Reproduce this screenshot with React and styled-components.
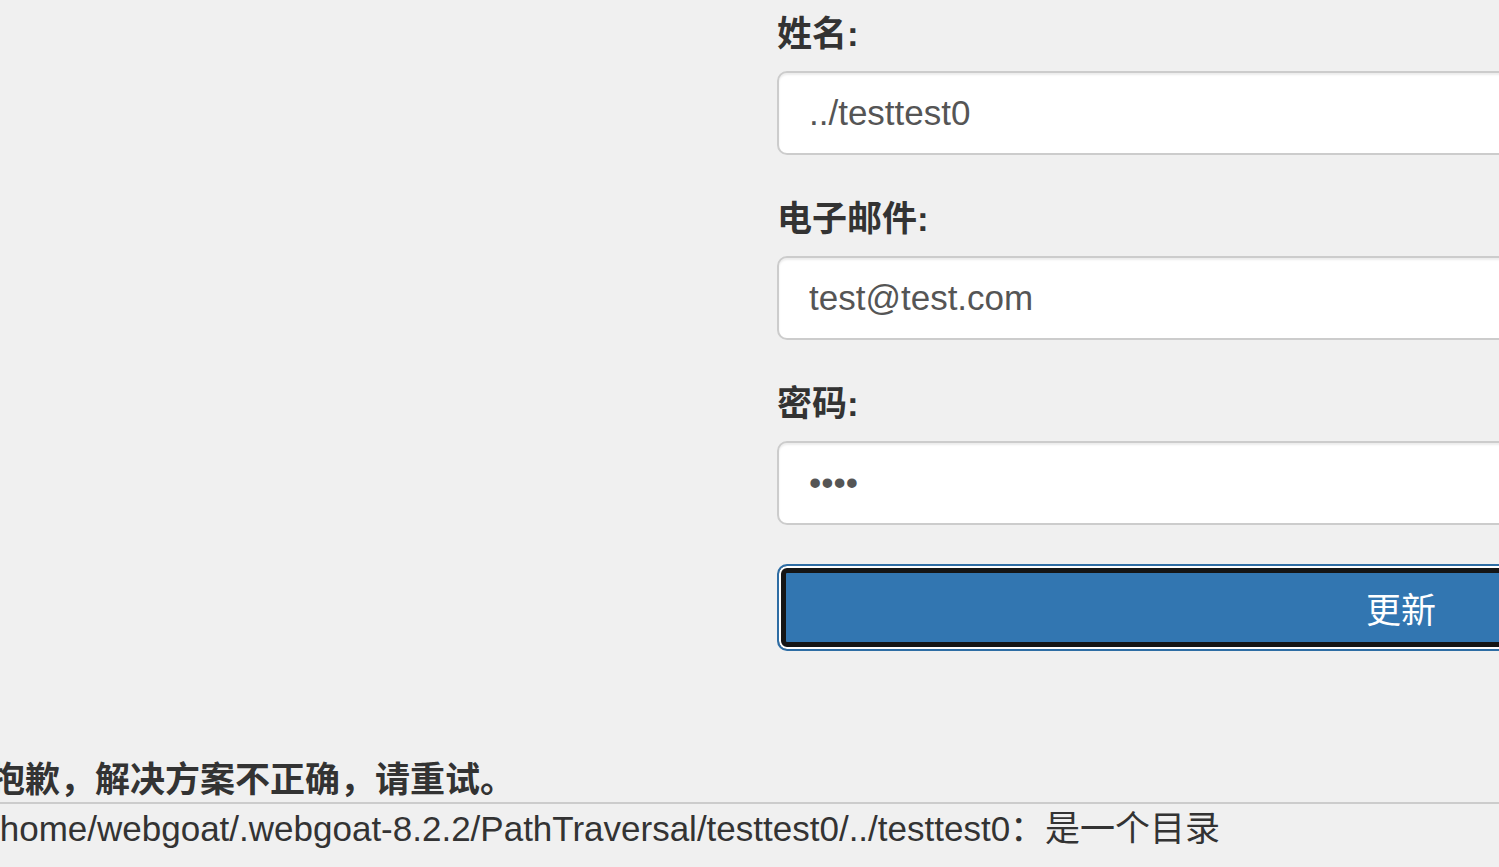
import React from "react";
import styled, { createGlobalStyle } from "styled-components";

const GlobalStyle = createGlobalStyle`
    html, body {
        margin: 0;
        padding: 0;
        background: #f0f0f0;
        overflow: hidden;
    }
    body {
        font-family: "Liberation Sans", "Noto Sans CJK SC", sans-serif;
        color: #333;
    }
`;

const Page = styled.div`
    width: 1499px;
    height: 867px;
    overflow: hidden;
    display: flex;
    flex-direction: column;
`;

const FormColumn = styled.form`
    padding: 9px 0 0 777px;
    width: 1248px;
    display: flex;
    flex-direction: column;
`;

const FormGroup = styled.div`
    display: flex;
    flex-direction: column;
    margin-bottom: 39px;
`;

const Label = styled.label`
    font-size: 35px;
    line-height: 50px;
    font-weight: 700;
    color: #333;
    margin-bottom: 12px;
`;

const TextInput = styled.input`
    box-sizing: border-box;
    width: 100%;
    height: 84px;
    padding: 0 30px;
    font-family: "Liberation Sans", "Noto Sans CJK SC", sans-serif;
    font-size: 35px;
    color: #555;
    background: #fff;
    border: 2px solid #ccc;
    border-radius: 10px;
    box-shadow: inset 0 2px 2px rgba(0, 0, 0, 0.075);
    outline: none;
`;

const SubmitButton = styled.button`
    box-sizing: border-box;
    width: 100%;
    height: 87px;
    font-family: "Liberation Sans", "Noto Sans CJK SC", sans-serif;
    font-size: 35px;
    color: #fff;
    background: #3276b1;
    border: 2px solid #2e6da4;
    border-radius: 10px;
    box-shadow: inset 0 0 0 2px #fff, inset 0 0 0 7px #151515;
    cursor: pointer;
`;

const Feedback = styled.div`
    margin: 107px 0 0 -10px;
    width: calc(100% + 10px);
`;

const FeedbackTitle = styled.div`
    font-size: 35px;
    line-height: 44px;
    font-weight: 700;
    color: #333;
    white-space: nowrap;
`;

const Rule = styled.div`
    height: 2px;
    background: #cccccc;
`;

const FeedbackOutput = styled.div`
    font-size: 35px;
    line-height: 50px;
    color: #333;
    white-space: nowrap;
`;

const App = () => {
    return (
        <Page>
            <GlobalStyle />
            <FormColumn onSubmit={e => e.preventDefault()}>
                <FormGroup>
                    <Label>姓名:</Label>
                    <TextInput type="text" value="../testtest0" readOnly />
                </FormGroup>
                <FormGroup>
                    <Label>电子邮件:</Label>
                    <TextInput type="text" value="test@test.com" readOnly />
                </FormGroup>
                <FormGroup>
                    <Label>密码:</Label>
                    <TextInput type="password" value="test" readOnly />
                </FormGroup>
                <SubmitButton type="submit">更新</SubmitButton>
            </FormColumn>
            <Feedback>
                <FeedbackTitle>抱歉，解决方案不正确，请重试。</FeedbackTitle>
                <Rule />
                <FeedbackOutput>
                    /home/webgoat/.webgoat-8.2.2/PathTraversal/testtest0/../testtest0：是一个目录
                </FeedbackOutput>
            </Feedback>
        </Page>
    );
};

export default App;
